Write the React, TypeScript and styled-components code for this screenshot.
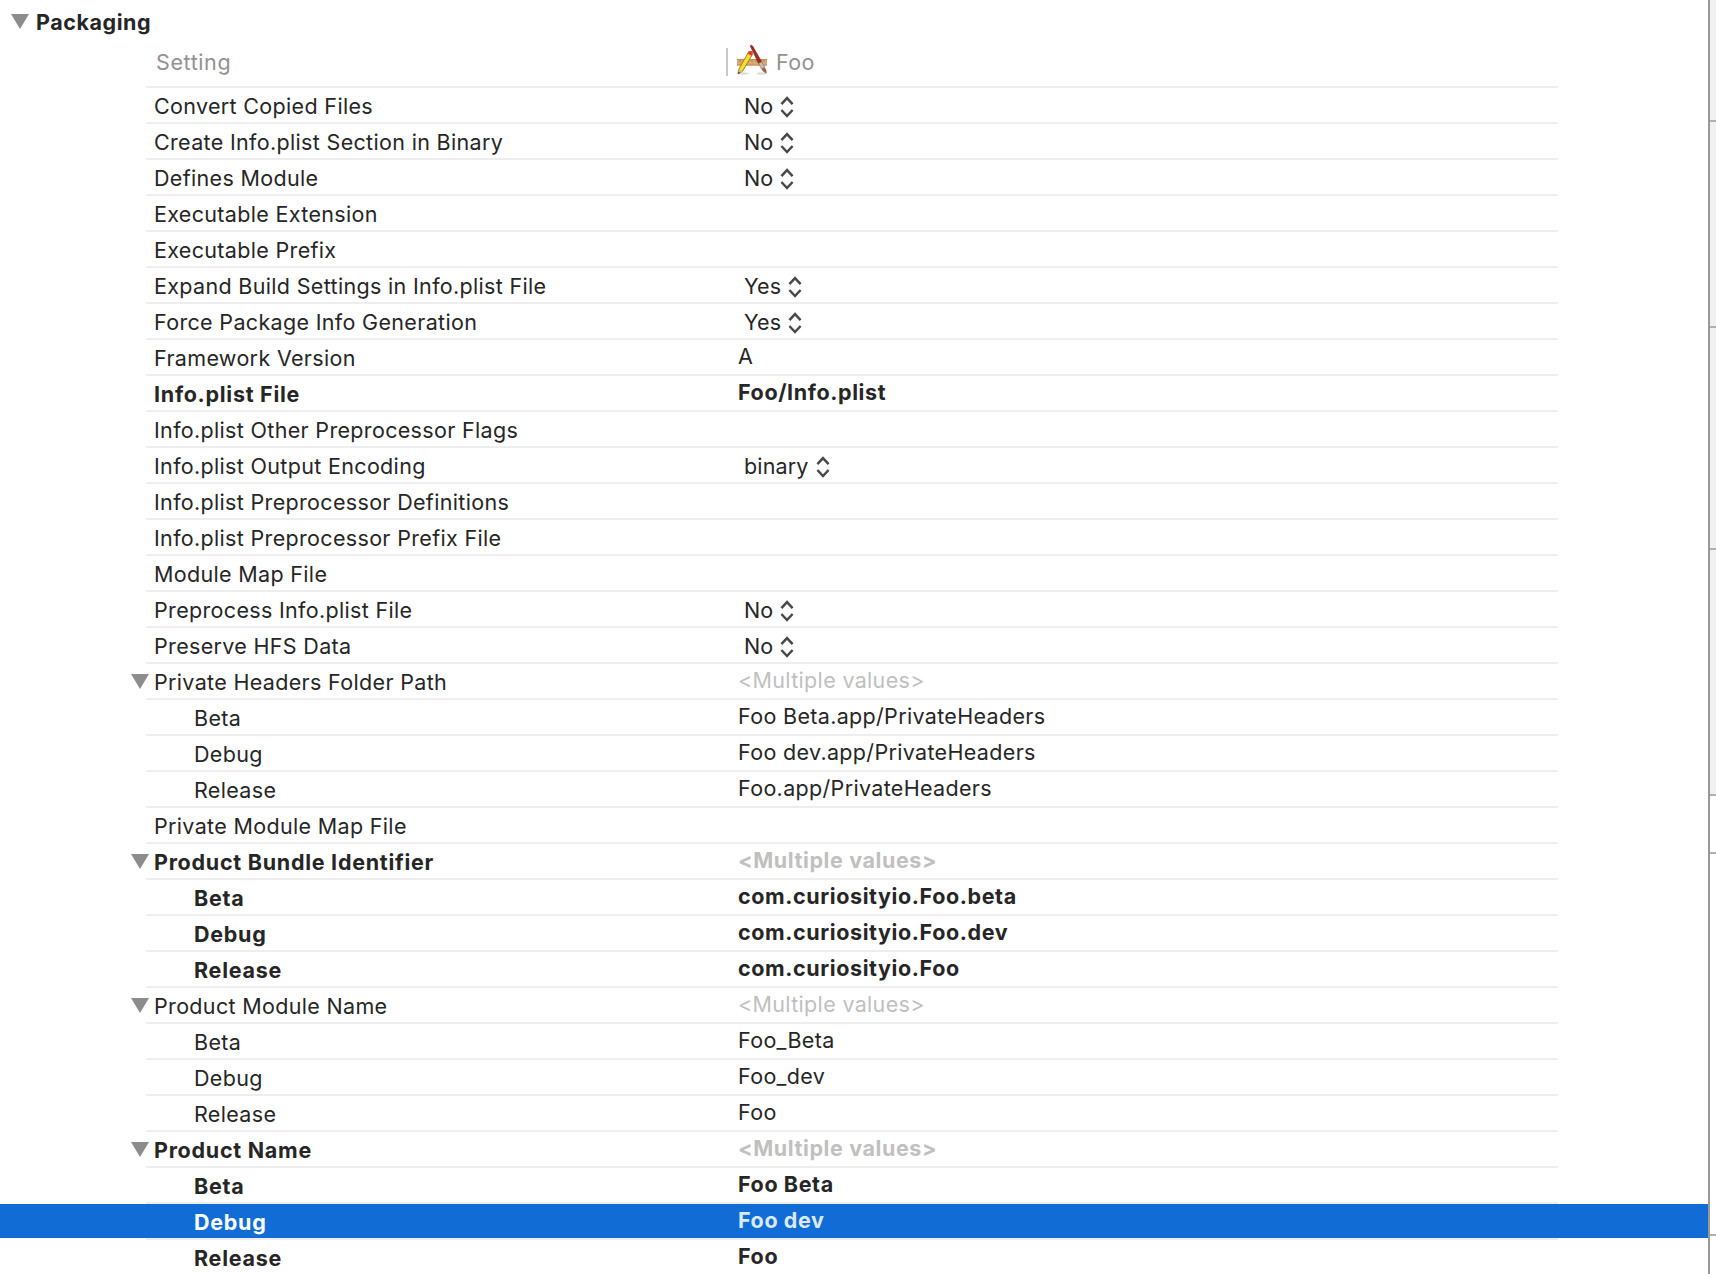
import React from 'react';
import styled, { createGlobalStyle } from 'styled-components';

const Global = createGlobalStyle`
  *, *::before, *::after { box-sizing: border-box; }
  html, body { margin: 0; padding: 0; background: #fff; overflow: hidden; }
`;

const Window = styled.div`
  width: 1716px;
  height: 1274px;
  display: flex;
  overflow: hidden;
  font-family: Inter, 'Liberation Sans', sans-serif;
  font-size: 21.5px;
  letter-spacing: 0.33px;
  color: #262626;
  white-space: nowrap;
`;

const Editor = styled.main`
  width: 1708px;
  flex: none;
  overflow: hidden;
`;

const SectionTitle = styled.h2`
  margin: 0;
  height: 38px;
  padding: 6px 0 0 11px;
  display: flex;
  align-items: flex-start;
  gap: 7px;
  font-size: inherit;
  font-weight: 700;
  letter-spacing: 0.55px;
  line-height: 32px;
`;

const Triangle = styled.svg<{ $drop?: number }>`
  display: block;
  flex: none;
  margin-top: ${p => p.$drop ?? 0}px;
`;

const HeaderRow = styled.div`
  height: 48px;
  display: flex;
  color: #929292;
  line-height: 48px;
`;

const SettingHead = styled.div`
  width: 726px;
  padding-left: 156px;
  letter-spacing: 0.6px;
`;

const TargetHead = styled.div`
  display: flex;
  align-items: flex-start;
`;

const Divider = styled.div`
  width: 2px;
  height: 28px;
  margin-top: 10px;
  background: #c9c9c9;
`;

const AppIcon = styled.svg`
  margin: 6px 8px 0 8px;
`;

const Row = styled.div<{ $bold?: boolean; $selected?: boolean }>`
  height: 36px;
  display: grid;
  grid-template: 2px 34px / 738px 1fr;
  font-weight: ${p => (p.$bold ? 700 : 400)};
  letter-spacing: ${p => (p.$bold ? '0.6px' : '0.33px')};
  color: ${p => (p.$selected ? '#fff' : 'inherit')};
  background: ${p => (p.$selected ? '#116cd6' : 'transparent')};
`;

const Rule = styled.div`
  grid-column: 1 / 3;
  background: linear-gradient(#eee, #eee) 146px 0 / 1412px 2px no-repeat #fff;
`;

const Name = styled.div<{ $nested?: boolean; $bold?: boolean }>`
  display: flex;
  gap: 5px;
  padding-left: ${p => (p.$nested ? 194 : 131)}px;
  line-height: 36px;
  letter-spacing: ${p => (p.$bold ? '0.73px' : 'inherit')};
`;

const Spacer = styled.span`
  width: 18px;
  flex: none;
`;

const Value = styled.div<{ $muted?: boolean; $selected?: boolean }>`
  line-height: 32px;
  color: ${p => (p.$muted ? '#c0c0c0' : p.$selected ? '#dbe9f9' : 'inherit')};
`;

const Popup = styled.div`
  display: flex;
  gap: 7px;
  padding-left: 6px;
  line-height: 36px;
  letter-spacing: 0.15px;
`;

const Stepper = styled.svg`
  margin-top: 8px;
  flex: none;
`;

const Gutter = styled.aside`
  width: 8px;
  flex: none;
  display: flex;
  flex-direction: column;
  border-left: 2px solid #999;
`;

const Pane = styled.div<{ $h: number; $plain?: boolean }>`
  height: ${p => p.$h}px;
  flex: none;
  border-bottom: 2px solid #b0b0b0;
  background: ${p => (p.$plain ? '#fff' : '#f1f1f1')};
`;

type Setting = {
  name: string;
  value?: string;
  kind?: 'popup' | 'group' | 'child';
  bold?: boolean;
  selected?: boolean;
};

const MULTI = '<Multiple values>';

const settings: Setting[] = [
  { name: 'Convert Copied Files', value: 'No', kind: 'popup' },
  { name: 'Create Info.plist Section in Binary', value: 'No', kind: 'popup' },
  { name: 'Defines Module', value: 'No', kind: 'popup' },
  { name: 'Executable Extension' },
  { name: 'Executable Prefix' },
  { name: 'Expand Build Settings in Info.plist File', value: 'Yes', kind: 'popup' },
  { name: 'Force Package Info Generation', value: 'Yes', kind: 'popup' },
  { name: 'Framework Version', value: 'A' },
  { name: 'Info.plist File', value: 'Foo/Info.plist', bold: true },
  { name: 'Info.plist Other Preprocessor Flags' },
  { name: 'Info.plist Output Encoding', value: 'binary', kind: 'popup' },
  { name: 'Info.plist Preprocessor Definitions' },
  { name: 'Info.plist Preprocessor Prefix File' },
  { name: 'Module Map File' },
  { name: 'Preprocess Info.plist File', value: 'No', kind: 'popup' },
  { name: 'Preserve HFS Data', value: 'No', kind: 'popup' },
  { name: 'Private Headers Folder Path', value: MULTI, kind: 'group' },
  { name: 'Beta', value: 'Foo Beta.app/PrivateHeaders', kind: 'child' },
  { name: 'Debug', value: 'Foo dev.app/PrivateHeaders', kind: 'child' },
  { name: 'Release', value: 'Foo.app/PrivateHeaders', kind: 'child' },
  { name: 'Private Module Map File' },
  { name: 'Product Bundle Identifier', value: MULTI, kind: 'group', bold: true },
  { name: 'Beta', value: 'com.curiosityio.Foo.beta', kind: 'child', bold: true },
  { name: 'Debug', value: 'com.curiosityio.Foo.dev', kind: 'child', bold: true },
  { name: 'Release', value: 'com.curiosityio.Foo', kind: 'child', bold: true },
  { name: 'Product Module Name', value: MULTI, kind: 'group' },
  { name: 'Beta', value: 'Foo_Beta', kind: 'child' },
  { name: 'Debug', value: 'Foo_dev', kind: 'child' },
  { name: 'Release', value: 'Foo', kind: 'child' },
  { name: 'Product Name', value: MULTI, kind: 'group', bold: true },
  { name: 'Beta', value: 'Foo Beta', kind: 'child', bold: true },
  { name: 'Debug', value: 'Foo dev', kind: 'child', bold: true, selected: true },
  { name: 'Release', value: 'Foo', kind: 'child', bold: true },
];

const Disclosure = ({ drop }: { drop: number }) => (
  <Triangle $drop={drop} width="18" height="15" viewBox="0 0 18 15">
    <path d="M0 0H18L9 15Z" fill="#8c8c8c" />
  </Triangle>
);

const Arrows = () => (
  <Stepper width="14" height="22" viewBox="0 0 14 22">
    <path d="M1.4 8.200 7 2.200 12.600 8.200M1.400 14 7 20 12.600 14" fill="none" stroke="#484848" strokeWidth="2.500" />
  </Stepper>
);

const SettingRow = ({ s }: { s: Setting }) => (
  <Row $bold={s.bold} $selected={s.selected}>
    <Rule />
    <Name $nested={s.kind === 'child'} $bold={s.bold}>
      {s.kind === 'group' && <Disclosure drop={10} />}
      {s.kind !== 'group' && s.kind !== 'child' && <Spacer />}
      <span>{s.name}</span>
    </Name>
    {s.kind === 'popup' ? (
      <Popup>
        <span>{s.value}</span>
        <Arrows />
      </Popup>
    ) : (
      <Value $muted={s.value === MULTI} $selected={s.selected}>{s.value}</Value>
    )}
  </Row>
);

export default function App() {
  return (
    <>
      <Global />
      <Window>
        <Editor>
          <SectionTitle>
            <Disclosure drop={8} />
            <span>Packaging</span>
          </SectionTitle>
          <HeaderRow>
            <SettingHead>Setting</SettingHead>
            <TargetHead>
              <Divider />
              <AppIcon width="32" height="32" viewBox="0 0 32 32">
                <ellipse cx="7" cy="29.500" rx="6" ry="1.200" fill="#dcdcdc" />
                <ellipse cx="26" cy="29.500" rx="5" ry="1.200" fill="#dcdcdc" />
                <rect x="1" y="15" width="30" height="6.500" fill="#dca873" />
                <path d="M1 15.500h30M1 21h30" stroke="#c48d58" />
                <path d="M4 16v2M8 16v2M12 16v2M16 16v2M20 16v2M24 16v2M28 16v2" stroke="#b27d4a" />
                <path d="M2 30 2.800 25.200 12.700 7.800 16.700 10 6.500 27.300Z" fill="#f6df2a" stroke="#94751c" strokeWidth="0.900" />
                <path d="M2 30 2.800 25.200 6.500 27.300Z" fill="#dcb583" />
                <path d="M2 30 2.500 27.800 4 28.600Z" fill="#3a2a18" />
                <path d="M11.500 9.800 13 7.200Q15 6 17 8.200L15.700 11.800Z" fill="#e23b3b" />
                <path d="M14.200 1.800Q15.500 0.500 16.600 2L25.600 17.800 22.600 19.500Z" fill="#9c3018" stroke="#6c1c10" strokeWidth="0.600" />
                <path d="M22.600 19.500 25.600 17.800 28.700 23.200 25.500 25Z" fill="#c9b9b5" stroke="#8c6c64" strokeWidth="0.600" />
                <path d="M25.500 25 28.700 23.200Q31 26 30.600 29.500 27 28.500 25.500 25Z" fill="#a0644e" />
              </AppIcon>
              <span>Foo</span>
            </TargetHead>
          </HeaderRow>
          {settings.map((s, i) => (
            <SettingRow key={i} s={s} />
          ))}
        </Editor>
        <Gutter>
          <Pane $h={122} />
          <Pane $h={206} />
          <Pane $h={222} />
          <Pane $h={246} />
          <Pane $h={58} $plain />
          <Pane $h={382} $plain />
        </Gutter>
      </Window>
    </>
  );
}
